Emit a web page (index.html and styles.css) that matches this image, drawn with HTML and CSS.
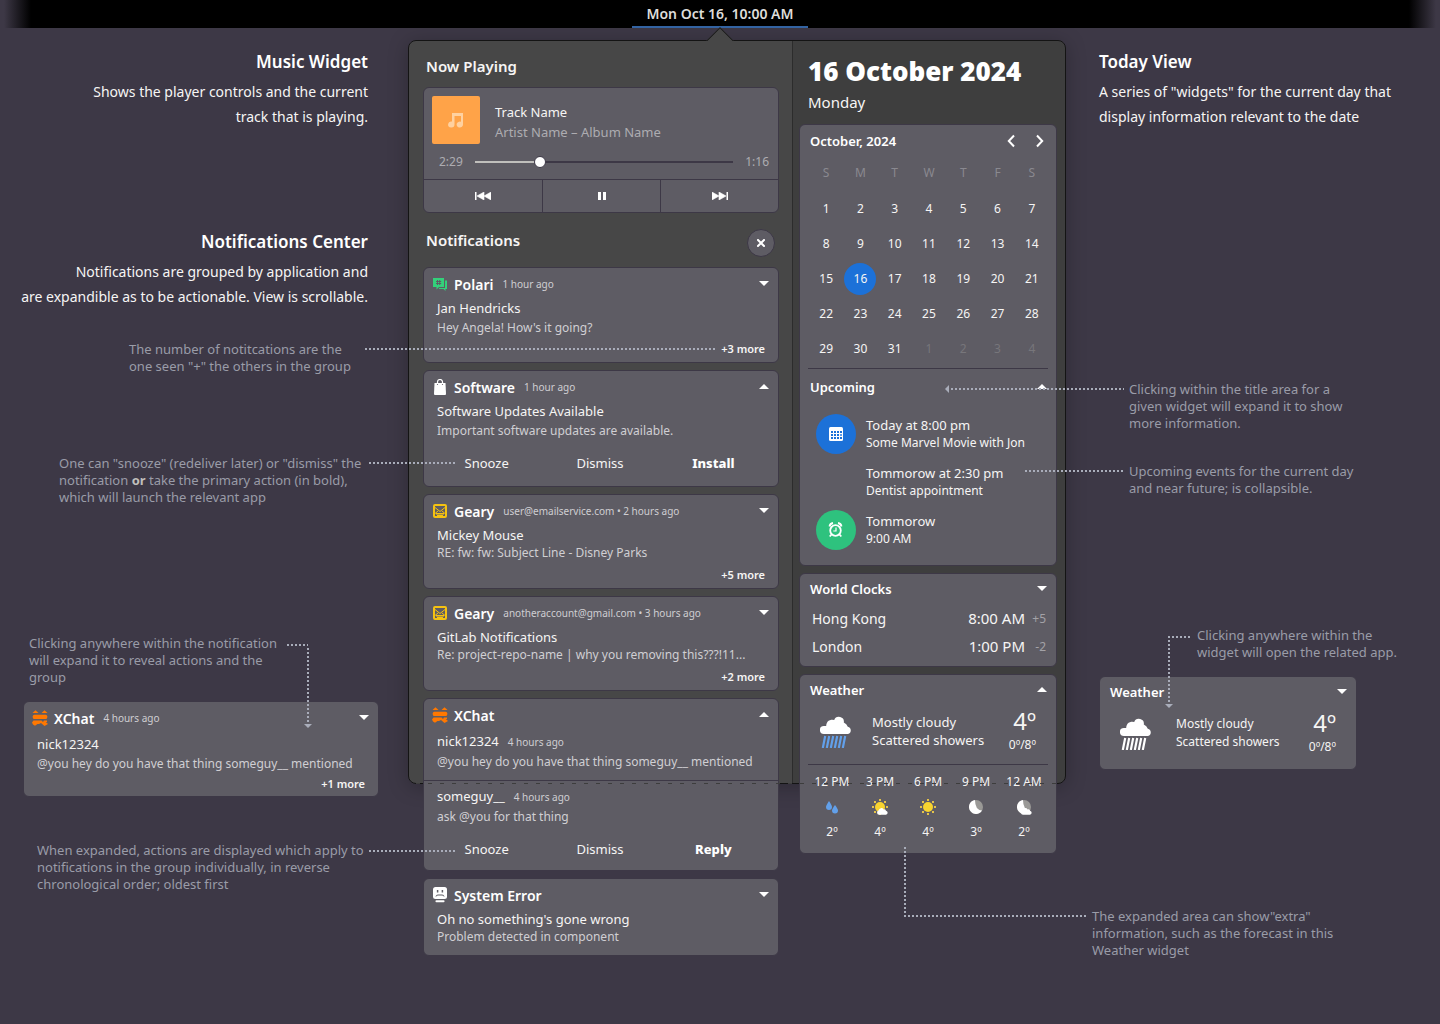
FILE: index.html
```html
<!DOCTYPE html>
<html lang="en">
<head>
<meta charset="utf-8">
<title>Notifications and Today View</title>
<link rel="stylesheet" href="styles.css">
</head>
<body>
<svg class="sprite" width="0" height="0" aria-hidden="true">
  <symbol id="down" viewBox="0 0 10 5"><path d="M0 0h10L5 5z" fill="#fff"/></symbol>
  <symbol id="up" viewBox="0 0 10 5"><path d="M0 5h10L5 0z" fill="#fff"/></symbol>
  <symbol id="polari" viewBox="0 0 16 16">
    <path d="M1 2h11v9H7l-2.500 2.500V11H1z" fill="#33d17a"/>
    <path d="M13 4.500h2V13h-1.500v2L11.500 13H7v-1h6z" fill="#33d17a"/>
    <path d="M5.500 4v5M7.700 4v5M4 5.500h5.200M4 7.500h5.200" stroke="#5e5c64" stroke-width="1" fill="none"/>
  </symbol>
  <symbol id="software" viewBox="0 0 16 16">
    <path d="M5.500 5V3a2.500 2.500 0 0 1 5 0v2" stroke="#fff" stroke-width="1.200" fill="none"/>
    <path d="M2.500 4h11l.5 11q0 1-1 1H3q-1 0-1-1z" fill="#fff"/>
    <circle cx="5.500" cy="5.500" r=".6" fill="#5e5c64"/><circle cx="10.500" cy="5.500" r=".6" fill="#5e5c64"/>
  </symbol>
  <symbol id="geary" viewBox="0 0 16 16">
    <rect x="2" y="2" width="12" height="12" rx="1" fill="none" stroke="#f5c211" stroke-width="2"/>
    <path d="M3 4.500l5 4 5-4M3 10.500l3-2.500M13 10.500L10 8" fill="none" stroke="#f5c211" stroke-width="1"/>
    <path d="M4 10h8v1.500H4zM5 12h6v1H5z" fill="#f5c211"/>
  </symbol>
  <symbol id="xchat" viewBox="0 0 16 16">
    <path d="M.5 3L3.500.2l3 2.800zM9.500 3l3-2.800 3 2.800z" fill="#ff7800"/>
    <rect x=".8" y="4.700" width="14.400" height="4.200" rx="1.500" fill="#ff7800"/>
    <path d="M0 12.500L1.500 10.500H9.500L11 12l1-1.500h3V12h-1.200L16 14l-3.500 2L9 13l-2 1H5.500L3 15.800 1 14.500z" fill="#ff7800"/>
  </symbol>
  <symbol id="error" viewBox="0 0 16 16">
    <rect x="1" y="0" width="14" height="12" rx="2.500" fill="#fff"/>
    <rect x="3.500" y="13.200" width="9" height="2" rx=".8" fill="#fff"/>
    <path d="M5.600 3v2.500M10.400 3v2.500" stroke="#5e5c64" stroke-width="1.500"/>
    <path d="M4 9.500q0-1.500 2-1.500h4q2 0 2 1.500" stroke="#5e5c64" stroke-width="1" fill="none"/>
  </symbol>
  <symbol id="cloud-rain" viewBox="0 0 32 32">
    <path d="M4 18a4 4 0 0 1-.2-8H6.200A6 6 0 0 1 14.200 4a5 5 0 0 1 9.600 2.600A7 7 0 0 1 27.800 10.800 3.700 3.700 0 0 1 28 18z" fill="#fff"/>
    <path d="M5.200 20L2.800 32M9.200 20L6.800 32M13.200 20l-2.400 12M17.200 20l-2.400 12M21.200 20l-2.400 12M25.200 20l-2.400 12" stroke="currentColor" stroke-width="2.200" fill="none"/>
  </symbol>
  <symbol id="drops" viewBox="0 0 16 16">
    <path d="M5 2q3 4.500 3 6a3 3 0 0 1-6 0q0-1.500 3-6zM11 6q3 4 3 5.500a3 3 0 0 1-6 0q0-1.500 3-5.500z" fill="#62a0ea"/>
  </symbol>
  <symbol id="sun" viewBox="0 0 16 16">
    <circle cx="8" cy="8" r="5" fill="#f8d42f"/>
    <path d="M7 0h2v2H7zM7 14h2v2H7zM0 7h2v2H0zM14 7h2v2h-2zM2 2h2v2H2zM12 2h2v2h-2zM2 12h2v2H2zM12 12h2v2h-2z" fill="#e5c34a"/>
  </symbol>
  <symbol id="small-cloud" viewBox="0 0 16 16">
    <path d="M7 15.800a2.300 2.300 0 0 1-.2-4.500 2.600 2.600 0 0 1 4.800-.9 2 2 0 0 1 2.400 1.300 2.100 2.100 0 0 1 0 4.100z" fill="#fff"/>
  </symbol>
  <symbol id="moon" viewBox="0 0 16 16">
    <circle cx="8" cy="8" r="7" fill="#9a9996"/>
    <path d="M7 1a7 7 0 1 0 7 10.500Q7 11 7 1z" fill="#fff"/>
  </symbol>
</svg>

<header class="topbar"><button class="clock" type="button">Mon Oct 16, 10:00 AM</button></header>

<main class="board">
  <div class="side side-left">
    <section class="intro">
      <h2>Music Widget</h2>
      <p>Shows the player controls and the current<br>track that is playing.</p>
    </section>
    <section class="intro intro-second">
      <h2>Notifications Center</h2>
      <p>Notifications are grouped by application and<br>are expandible as to be actionable. View is scrollable.</p>
    </section>
    <p class="note note-count">The number of notitcations are the<br>one seen "+" the others in the group</p>
    <p class="note note-snooze">One can "snooze" (redeliver later) or "dismiss" the<br>notification <b>or</b> take the primary action (in bold),<br>which will launch the relevant app</p>
    <p class="note note-expand">Clicking anywhere within the notification<br>will expand it to reveal actions and the<br>group</p>
    <article class="card sample">
      <header class="card-head">
        <svg class="app-icon"><use href="#xchat"/></svg><h3>XChat</h3><span class="time">4 hours ago</span>
        <button class="toggle" type="button" aria-label="Expand"><svg><use href="#down"/></svg></button>
      </header>
      <div class="message"><h4>nick12324</h4><p>@you hey do you have that thing someguy__ mentioned</p></div>
      <p class="more">+1 more</p>
    </article>
    <p class="note note-actions">When expanded, actions are displayed which apply to<br>notifications in the group individually, in reverse<br>chronological order; oldest first</p>
  </div>

  <div class="popover">
    <div class="frame"><span class="pointer"></span></div>

    <section class="pane notifications">
      <h2 class="pane-title">Now Playing</h2>
      <div class="card player">
        <div class="track">
          <svg class="art" viewBox="0 0 48 48"><rect width="48" height="48" rx="2" fill="#ffa348"/><path d="M20 17h11v11.500a3.200 3 0 1 1-2-2.700V20h-6.500v8.500a3.200 3 0 1 1-2.500-2.900z" fill="#ffd1a0"/></svg>
          <div><h3 class="track-name">Track Name</h3><p class="artist">Artist Name – Album Name</p></div>
        </div>
        <div class="progress">
          <span>2:29</span><input type="range" min="0" max="100" value="24" aria-label="Position"><span>1:16</span>
        </div>
        <div class="controls">
          <button type="button" aria-label="Previous"><svg width="16" height="8" viewBox="0 0 16 8"><path d="M0 0h1.500v8H0zM9 0v8L2 4zM16 0v8L9 4z" fill="#fff"/><path d="M9 0v8l-7-4zM16 0v8L9 4z" stroke="#fff" stroke-width=".6" fill="none"/></svg></button>
          <button type="button" aria-label="Pause"><svg width="8" height="8" viewBox="0 0 8 8"><path d="M0 0h3v8H0zM5 0h3v8H5z" fill="#fff"/></svg></button>
          <button type="button" aria-label="Next"><svg width="16" height="8" viewBox="0 0 16 8"><path d="M14.500 0H16v8h-1.500zM0 0v8l7-4zM7 0v8l7-4z" fill="#fff"/><path d="M0 0v8l7-4zM7 0v8l7-4z" stroke="#fff" stroke-width=".6" fill="none"/></svg></button>
        </div>
      </div>

      <div class="list-head">
        <h2 class="pane-title">Notifications</h2>
        <button class="clear" type="button" aria-label="Clear all"><svg width="8" height="8" viewBox="0 0 8 8"><path d="M1 1l6 6M7 1L1 7" stroke="#fff" stroke-width="2" stroke-linecap="square"/></svg></button>
      </div>

      <div class="stack">
        <article class="card">
          <header class="card-head">
            <svg class="app-icon"><use href="#polari"/></svg><h3>Polari</h3><span class="time">1 hour ago</span>
            <button class="toggle" type="button" aria-label="Expand"><svg><use href="#down"/></svg></button>
          </header>
          <div class="message"><h4>Jan Hendricks</h4><p>Hey Angela! How's it going?</p></div>
          <p class="more">+3 more</p>
        </article>
        <article class="card">
          <header class="card-head">
            <svg class="app-icon"><use href="#software"/></svg><h3>Software</h3><span class="time">1 hour ago</span>
            <button class="toggle" type="button" aria-label="Collapse"><svg><use href="#up"/></svg></button>
          </header>
          <div class="message"><h4>Software Updates Available</h4><p>Important software updates are available.</p></div>
          <div class="actions"><button type="button">Snooze</button><button type="button">Dismiss</button><button class="primary" type="button">Install</button></div>
        </article>
        <article class="card compact">
          <header class="card-head">
            <svg class="app-icon"><use href="#geary"/></svg><h3>Geary</h3><span class="time">user@emailservice.com • 2 hours ago</span>
            <button class="toggle" type="button" aria-label="Expand"><svg><use href="#down"/></svg></button>
          </header>
          <div class="message"><h4>Mickey Mouse</h4><p>RE: fw: fw: Subject Line - Disney Parks</p></div>
          <p class="more">+5 more</p>
        </article>
        <article class="card compact">
          <header class="card-head">
            <svg class="app-icon"><use href="#geary"/></svg><h3>Geary</h3><span class="time">anotheraccount@gmail.com • 3 hours ago</span>
            <button class="toggle" type="button" aria-label="Expand"><svg><use href="#down"/></svg></button>
          </header>
          <div class="message"><h4>GitLab Notifications</h4><p>Re: project-repo-name | why you removing this???!11...</p></div>
          <p class="more">+2 more</p>
        </article>
        <article class="card thread">
          <header class="card-head">
            <svg class="app-icon"><use href="#xchat"/></svg><h3>XChat</h3>
            <button class="toggle" type="button" aria-label="Collapse"><svg><use href="#up"/></svg></button>
          </header>
          <div class="message"><h4>nick12324<span class="time">4 hours ago</span></h4><p>@you hey do you have that thing someguy__ mentioned</p></div>
          <div class="message"><h4>someguy__<span class="time">4 hours ago</span></h4><p>ask @you for that thing</p></div>
          <div class="actions"><button type="button">Snooze</button><button type="button">Dismiss</button><button class="primary" type="button">Reply</button></div>
        </article>
        <article class="card compact last">
          <header class="card-head">
            <svg class="app-icon"><use href="#error"/></svg><h3>System Error</h3>
            <button class="toggle" type="button" aria-label="Expand"><svg><use href="#down"/></svg></button>
          </header>
          <div class="message"><h4>Oh no something's gone wrong</h4><p>Problem detected in component</p></div>
        </article>
      </div>
    </section>

    <section class="pane today">
      <h1>16 October 2024</h1>
      <p class="weekday">Monday</p>
      <div class="stack">
        <article class="card">
          <header class="month-head">
            <h3>October, 2024</h3>
            <button type="button" aria-label="Previous month"><svg width="8" height="14" viewBox="0 0 8 14"><path d="M7 1.500L1.800 7 7 12.500" stroke="#fff" stroke-width="2" fill="none"/></svg></button>
            <button type="button" aria-label="Next month"><svg width="8" height="14" viewBox="0 0 8 14"><path d="M1 1.500L6.200 7 1 12.500" stroke="#fff" stroke-width="2" fill="none"/></svg></button>
          </header>
          <table class="calendar">
            <thead><tr><th>S</th><th>M</th><th>T</th><th>W</th><th>T</th><th>F</th><th>S</th></tr></thead>
            <tbody>
              <tr><td>1</td><td>2</td><td>3</td><td>4</td><td>5</td><td>6</td><td>7</td></tr>
              <tr><td>8</td><td>9</td><td>10</td><td>11</td><td>12</td><td>13</td><td>14</td></tr>
              <tr><td>15</td><td><span class="current">16</span></td><td>17</td><td>18</td><td>19</td><td>20</td><td>21</td></tr>
              <tr><td>22</td><td>23</td><td>24</td><td>25</td><td>26</td><td>27</td><td>28</td></tr>
              <tr><td>29</td><td>30</td><td>31</td><td class="dim">1</td><td class="dim">2</td><td class="dim">3</td><td class="dim">4</td></tr>
            </tbody>
          </table>
          <hr>
          <header class="widget-head upcoming-head">
            <h3>Upcoming</h3>
            <button class="toggle" type="button" aria-label="Collapse"><svg><use href="#up"/></svg></button>
          </header>
          <ul class="events">
            <li>
              <svg class="badge" viewBox="0 0 40 40"><circle cx="20" cy="20" r="20" fill="#1c71d8"/><rect x="13" y="13" width="14" height="14" rx="1.500" fill="#fff"/><path d="M15 17h2v2h-2zM18 17h2v2h-2zM21 17h2v2h-2zM24 17h2v2h-2zM15 20h2v2h-2zM18 20h2v2h-2zM21 20h2v2h-2zM15 23h2v2h-2zM18 23h2v2h-2zM21 23h2v2h-2zM24 23h2v2h-2z" fill="#1c71d8"/><path d="M24 20h2v2h-2z" fill="#62a0ea"/></svg>
              <div><h4>Today at 8:00 pm</h4><p>Some Marvel Movie with Jon</p></div>
            </li>
            <li>
              <span class="badge"></span>
              <div><h4>Tommorow at 2:30 pm</h4><p>Dentist appointment</p></div>
            </li>
            <li>
              <svg class="badge" viewBox="0 0 40 40"><circle cx="20" cy="20" r="20" fill="#2ec27e"/><circle cx="19.500" cy="20.500" r="5.300" fill="none" stroke="#fff" stroke-width="1.800"/><path d="M20 17.500V21h-2.700" fill="none" stroke="#fff" stroke-width="1.200"/><path d="M13.500 16.500q.5-3 3.500-3.500M25.500 16.500q-.5-3-3.500-3.500" stroke="#fff" stroke-width="1.800" fill="none"/><path d="M15.500 24.500l-1.800 2M23.500 24.500l1.800 2" stroke="#fff" stroke-width="1.800"/></svg>
              <div><h4>Tommorow</h4><p>9:00 AM</p></div>
            </li>
          </ul>
        </article>

        <article class="card world">
          <header class="widget-head">
            <h3>World Clocks</h3>
            <button class="toggle" type="button" aria-label="Expand"><svg><use href="#down"/></svg></button>
          </header>
          <table class="zones">
            <tbody>
              <tr><th>Hong Kong</th><td>8:00 AM</td><td class="shift">+5</td></tr>
              <tr><th>London</th><td>1:00 PM</td><td class="shift">-2</td></tr>
            </tbody>
          </table>
        </article>

        <article class="card">
          <header class="widget-head">
            <h3>Weather</h3>
            <button class="toggle" type="button" aria-label="Collapse"><svg><use href="#up"/></svg></button>
          </header>
          <div class="now">
            <svg class="sky blue"><use href="#cloud-rain"/></svg>
            <p class="summary">Mostly cloudy<br>Scattered showers</p>
            <div class="temps"><strong>4º</strong><span>0º/8º</span></div>
          </div>
          <hr>
          <ul class="forecast">
            <li><span>12 PM</span><svg><use href="#drops"/></svg><span>2º</span></li>
            <li><span>3 PM</span><svg><use href="#sun"/><use href="#small-cloud"/></svg><span>4º</span></li>
            <li><span>6 PM</span><svg><use href="#sun"/></svg><span>4º</span></li>
            <li><span>9 PM</span><svg><use href="#moon"/></svg><span>3º</span></li>
            <li><span>12 AM</span><svg><use href="#moon"/><use href="#small-cloud"/></svg><span>2º</span></li>
          </ul>
        </article>
      </div>
    </section>
    <span class="fold"></span>
  </div>

  <div class="side side-right">
    <section class="intro">
      <h2>Today View</h2>
      <p>A series of "widgets" for the current day that<br>display information relevant to the date</p>
    </section>
    <p class="note note-title">Clicking within the title area for a<br>given widget will expand it to show<br>more information.</p>
    <p class="note note-events">Upcoming events for the current day<br>and near future; is collapsible.</p>
    <p class="note note-open">Clicking anywhere within the<br>widget will open the related app.</p>
    <article class="card sample">
      <header class="widget-head">
        <h3>Weather</h3>
        <button class="toggle" type="button" aria-label="Expand"><svg><use href="#down"/></svg></button>
      </header>
      <div class="now">
        <svg class="sky"><use href="#cloud-rain"/></svg>
        <p class="summary">Mostly cloudy<br>Scattered showers</p>
        <div class="temps"><strong>4º</strong><span>0º/8º</span></div>
      </div>
    </article>
    <p class="note note-extra">The expanded area can show"extra"<br>information, such as the forecast in this<br>Weather widget</p>
  </div>

  <svg class="connectors" viewBox="0 28 1440 996" aria-hidden="true">
    <g fill="none" stroke="#a9adba" stroke-width="2" stroke-dasharray="2 2">
      <path d="M365 349H716M369 463H456M369 851H456M287 645H308M308 648V724"/>
      <path d="M951 389H1124M1025 471H1124M1190 637H1168M1169 640V704M905 847V914M904 916H1086"/>
    </g>
    <path d="M304 724h8l-4 4zM1165 704h8l-4 4zM949 385v8l-4-4z" fill="#a9adba"/>
  </svg>
</main>
</body>
</html>
```
FILE: styles.css
```css
* { box-sizing: border-box; }

body {
  margin: 0;
  min-height: 100vh;
  background: #3d3846;
  color: #f6f5f4;
  font-family: "Noto Sans", "Open Sans", sans-serif;
  font-size: 13px;
}

h1, h2, h3, h4, p, ul { margin: 0; padding: 0; font-weight: 400; }
ul { list-style: none; }
button { border: 0; padding: 0; background: none; color: inherit; font: inherit; cursor: pointer; }
svg { display: block; }
.sprite { position: absolute; }

/* Top bar */
.topbar {
  display: flex;
  justify-content: center;
  height: 28px;
  background: linear-gradient(to right, #3d3846 4px, #000 31px, #000 calc(100% - 31px), #3d3846 calc(100% - 4px));
}
.clock {
  width: 176px;
  padding-top: 2px;
  border-bottom: 2px solid #3465a4;
  color: #deddda;
  font-size: 14px;
  font-weight: 600;
  line-height: 24px;
}

/* Page columns */
.board {
  position: relative;
  display: grid;
  grid-template-columns: 408px 658px 1fr;
  align-items: start;
}
.connectors {
  position: absolute;
  top: 0;
  left: 0;
  width: 1440px;
  height: 996px;
  pointer-events: none;
}

/* Annotations */
.side { padding-top: 22px; }
.intro { padding: 0 33px; }
.side-left .intro { padding: 0 40px 0 0; text-align: right; }
.intro-second { margin-top: 101px; }
.intro h2 { font-size: 17px; font-weight: 600; line-height: 24px; color: #fff; }
.intro p { margin-top: 5px; font-size: 14px; line-height: 25px; white-space: nowrap; }
.note { color: #9a9ca8; font-size: 13px; line-height: 17px; white-space: nowrap; }
.note b { color: #c0bfbc; }
.note-count { margin: 32px 0 0 129px; }
.note-snooze { margin: 80px 0 0 59px; }
.note-expand { margin: 129px 0 0 29px; }
.note-actions { margin: 45px 0 0 37px; }
.note-title { margin: 252px 0 0 63px; }
.note-events { margin: 31px 0 0 63px; }
.note-open { margin: 130px 0 0 131px; }
.note-extra { margin: 138px 0 0 26px; }
.side-left .sample { width: 356px; margin: 15px 0 0 23px; }
.side-right .sample { width: 258px; margin: 15px 0 0 33px; }

/* Popover */
.popover {
  position: relative;
  display: grid;
  grid-template-columns: 385px 1fr;
  align-items: start;
  margin-top: 12px;
}
.frame {
  position: absolute;
  inset: 0 0 172px;
  border: 1px solid #141414;
  border-radius: 8px;
  background: linear-gradient(to right, #474747 383px, #2c2c2c 383px, #2c2c2c 384px, #3e3e3e 384px);
  box-shadow: 0 3px 20px rgba(0, 0, 0, .25);
}
.pointer {
  position: absolute;
  top: -10px;
  left: 301px;
  width: 20px;
  height: 20px;
  border: 1px solid #141414;
  background: #474747;
  transform: rotate(45deg);
  clip-path: polygon(0 0, 100% 0, 0 100%);
}
.fold {
  position: absolute;
  right: 8px;
  bottom: 172px;
  left: 8px;
  height: 1px;
  background: repeating-linear-gradient(to right, #3d3d3d 0 4px, transparent 4px 12px);
}
.pane { position: relative; }
.notifications { padding: 16px 14px 0 15px; }
.today { padding: 15px 9px 0 6px; }
.pane-title { padding-left: 3px; font-size: 15px; font-weight: 600; line-height: 20px; }
.today h1 { padding-left: 9px; color: #fff; font-size: 26px; font-weight: 900; line-height: 32px; white-space: nowrap; }
.weekday { margin: 3px 0 10px; padding-left: 9px; font-size: 15px; line-height: 24px; }
.stack { display: grid; gap: 7px; }

/* Cards */
.card {
  border: 1px solid #3d3846;
  border-radius: 6px;
  background: #5e5c64;
}
.card h3 { color: #fff; font-weight: 600; }
.card-head { display: flex; align-items: center; height: 20px; margin-top: 6px; padding: 0 8px; }
.app-icon { width: 16px; height: 16px; margin-right: 6px; }
.card-head h3 { font-size: 14px; }
.time { margin-left: 9px; color: #cfced2; font-size: 10px; }
.toggle { width: 20px; height: 20px; margin: 0 -4px 0 auto; padding-bottom: 2px; display: grid; place-items: center; }
.toggle svg { width: 10px; height: 5px; }
.message { padding: 4px 13px 0; line-height: 20px; white-space: nowrap; }
.message h4 { font-size: 13px; }
.message p { color: #d0cfd3; font-size: 12px; }
.compact .message p { line-height: 16px; }
.more { padding: 0 13px 2px; font-size: 11px; font-weight: 600; line-height: 22px; text-align: right; }
.compact .more { margin-top: 3px; }
.sample .message { padding-top: 6px; }
.sample .more { line-height: 20px; }
.actions { display: grid; grid-template-columns: 1fr 1fr 1fr; padding: 12px 8px 13px 6px; }
.actions button { font-size: 13px; line-height: 20px; }
.actions .primary { color: #fff; font-weight: 800; }
.thread .message { padding-top: 6px; padding-bottom: 8px; }
.thread .message + .message { padding-top: 5px; padding-bottom: 0; border-top: 1px solid #3d3846; }
.thread .actions { padding-bottom: 11px; }
.last { padding-bottom: 10px; }

/* Player */
.player { margin-top: 11px; }
.track { display: flex; align-items: end; gap: 15px; padding: 8px 8px 0; }
.art { width: 48px; height: 48px; }
.track-name { font-size: 13px; line-height: 20px; }
.player .track-name { color: #f6f5f4; font-weight: 400; }
.artist { padding-bottom: 2px; color: #adacb1; font-size: 13px; line-height: 20px; }
.progress { display: flex; align-items: center; gap: 12px; height: 35px; padding: 0 9px 0 15px; color: #adacb1; font-size: 12px; }
.progress input {
  flex: 1;
  min-width: 0;
  height: 12px;
  margin: 0;
  appearance: none;
  background: linear-gradient(to right, #c0bfbc 25%, #3d3846 25%) center / 100% 2px no-repeat;
}
.progress input::-webkit-slider-thumb {
  appearance: none;
  width: 12px;
  height: 12px;
  border: 1px solid #3d3846;
  border-radius: 50%;
  background: #fff;
}
.controls { display: grid; grid-template-columns: 1fr 1fr 1fr; border-top: 1px solid #3d3846; }
.controls button { display: grid; place-items: center; height: 32px; }
.controls button + button { border-left: 1px solid #3d3846; }

.list-head { display: flex; justify-content: space-between; margin: 16px 4px 10px 0; height: 28px; }
.list-head .pane-title { line-height: 22px; }
.clear { display: grid; place-items: center; width: 28px; height: 28px; border: 1px solid #3d3846; border-radius: 50%; background: #5e5c64; }

/* Calendar */
.month-head { display: flex; align-items: center; height: 28px; padding: 4px 12px 0 10px; }
.month-head h3 { margin-right: auto; font-size: 13px; }
.month-head button { margin-left: 21px; }
.calendar { width: 240px; margin-left: 9px; border-collapse: collapse; table-layout: fixed; font-size: 12px; text-align: center; }
.calendar th { height: 38px; padding: 0; color: #8a8990; font-weight: 400; }
.calendar td { height: 35px; padding: 0; }
.calendar .dim { color: #77767b; }
.current { display: block; width: 32px; margin: 0 auto; border-radius: 50%; background: #1c71d8; line-height: 32px; }
hr { height: 1px; margin: 2px 8px 0; border: 0; background: #3d3846; }

.widget-head { display: flex; align-items: center; height: 20px; margin-top: 5px; padding: 0 8px 0 10px; }
.widget-head h3 { font-size: 13px; }
.upcoming-head { margin-top: 8px; }

.events { display: grid; gap: 8px; margin-top: 17px; padding: 0 16px 15px; }
.events li { display: flex; align-items: center; gap: 10px; white-space: nowrap; }
.badge { width: 40px; height: 40px; }
.events h4 { font-size: 13px; line-height: 18px; }
.events p { font-size: 12px; line-height: 18px; }

/* World clocks */
.zones { width: 100%; margin-top: 5px; margin-bottom: 6px; border-collapse: collapse; font-size: 14px; }
.zones th { height: 28px; padding: 0 0 0 12px; font-weight: 400; text-align: left; }
.zones td { padding: 0; font-size: 15px; text-align: right; }
.zones .shift { width: 31px; padding-right: 10px; color: #a3a2a7; font-size: 12px; }

/* Weather */
.now { display: flex; align-items: center; height: 60px; margin-top: 2px; padding: 0 20px; }
.sky { width: 32px; height: 32px; color: #fff; }
.blue { color: #62a0ea; }
.summary { margin: 0 auto 0 20px; padding-bottom: 3px; font-size: 13px; line-height: 18px; white-space: nowrap; }
.side-right .summary { margin-left: 24px; font-size: 12px; }
.temps { display: grid; padding-bottom: 4px; text-align: right; }
.temps strong { font-size: 24px; font-weight: 400; line-height: 30px; }
.temps span { font-size: 12px; line-height: 18px; }
.forecast { display: grid; grid-template-columns: repeat(5, 1fr); padding: 8px 8px 12px; font-size: 12px; text-align: center; }
.forecast li { display: grid; justify-items: center; gap: 8px; line-height: 18px; }
.forecast svg { width: 16px; height: 16px; }
.side-right .now { margin-bottom: 5px; }
```
